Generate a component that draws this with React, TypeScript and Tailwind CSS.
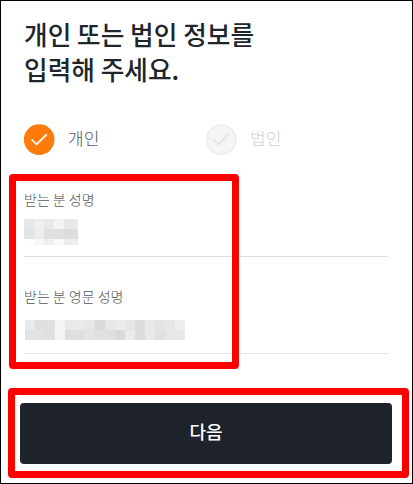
import React, { useState } from 'react'

const NAME_CELLS = [
    ['bg-[#e6e7e8]', 'bg-[#efeff0]', 'bg-[#e9e9ea]', 'bg-[#f4f4f4]', 'bg-[#e5e6e7]', 'bg-[#e8e9ea]'],
    ['bg-[#e2e3e4]', 'bg-[#ededee]', 'bg-[#dfe0e1]', 'bg-[#e0e1e3]', 'bg-[#d9dbdc]', 'bg-[#dddee0]'],
    ['bg-[#fefefe]', 'bg-[#f7f7f7]', 'bg-[#efeff0]', 'bg-[#f9f9f9]', 'bg-[#ebeced]', 'bg-[#efeff0]'],
]

const ENGLISH_CELLS = [
    [
        'bg-[#e9eaeb]', 'bg-[#dedfe0]', 'bg-[#dfe0e1]', 'bg-[#f5f5f6]', 'bg-[#e8e9ea]', 'bg-[#e9eaeb]', 'bg-[#e6e7e8]', 'bg-[#dadadc]',
        'bg-[#e7e7e8]', 'bg-[#eaebec]', 'bg-[#e5e6e7]', 'bg-[#dcdddf]', 'bg-[#e9e9ea]', 'bg-[#e3e4e5]', 'bg-[#e5e6e7]', 'bg-[#eeeff0]',
    ],
    [
        'bg-[#e1e2e3]', 'bg-[#e1e2e4]', 'bg-[#dedfe1]', 'bg-[#f5f5f6]', 'bg-[#dddee0]', 'bg-[#dfe0e2]', 'bg-[#e3e4e5]', 'bg-[#e0e1e3]',
        'bg-[#dfe0e1]', 'bg-[#d9dadb]', 'bg-[#eaebec]', 'bg-[#dcdddf]', 'bg-[#e9eaeb]', 'bg-[#dfe0e1]', 'bg-[#e5e6e7]', 'bg-[#e7e8e9]',
    ],
]

function Check({ active }: { active: boolean }) {
    return (
        <svg className="size-8 shrink-0" viewBox="0 0 32 32" fill="none">
            <circle
                cx="16.2"
                cy="16.6"
                r={active ? 15.3 : 14.7}
                fill={active ? '#fb7b0b' : '#f4f5f6'}
                stroke={active ? 'none' : '#e9eaeb'}
                strokeWidth="1.2"
            />
            <path
                d="M8.6 16.3l5 5 10.2-10"
                stroke={active ? '#fff0dd' : '#e1e3e5'}
                strokeWidth="1.9"
            />
        </svg>
    )
}

export default function App() {
    const [type, setType] = useState('personal')

    return (
        <div className="relative w-[413px] h-[484px] bg-white border border-black overflow-hidden font-['Noto_Sans_CJK_KR',sans-serif]">
            <main className="flex flex-col pt-[15px]">
                <h1 className="ml-[23px] text-[25.7px] leading-[35px] font-medium text-[#20242b]">
                    개인 또는 법인 정보를<br />입력해 주세요.
                </h1>

                <div className="flex ml-[22px] mt-[37px] h-8">
                    <button type="button" onClick={() => setType('personal')} className="flex items-center gap-[13px] w-[182px]">
                        <Check active={type === 'personal'} />
                        <span className="text-[17px] leading-8 font-light text-[#555a63] -mt-0.5">개인</span>
                    </button>
                    <button type="button" onClick={() => setType('company')} className="flex items-center gap-[13px]">
                        <Check active={type === 'company'} />
                        <span className="text-[17px] leading-8 font-light text-[#cfd1d3] -mt-0.5">법인</span>
                    </button>
                </div>

                {/* 받는 분 정보 */}
                <section className="ml-[23px] w-[364px] mt-[34px]">
                    <div className="h-[68px] border-b border-[#dcdddd]">
                        <p className="h-[30px] text-[14px] leading-5 font-light text-[#55585c]">받는 분 성명</p>
                        <div className="grid grid-cols-[10px_10px_10px_10px_7px_7px] grid-rows-[10px_10px_6px] w-[54px]">
                            {NAME_CELLS.flat().map((color, i) => <span key={i} className={color} />)}
                        </div>
                    </div>
                    <div className="h-[97px] pt-[29px] border-b border-[#e2e2e3]">
                        <p className="h-[34px] text-[14px] leading-5 font-light text-[#55585c]">받는 분 영문 성명</p>
                        <div className="grid grid-cols-16 grid-rows-[10px_10px] w-40 ml-px">
                            {ENGLISH_CELLS.flat().map((color, i) => <span key={i} className={color} />)}
                        </div>
                    </div>
                </section>

                <button type="button" className="ml-[19px] mt-[49px] w-[372px] h-[61px] rounded-[4px] bg-[#1e222a] text-white text-[18px] leading-6 font-medium pb-[5px]">
                    다음
                </button>
            </main>

            {/* 강조 테두리 */}
            <div className="absolute left-2 top-[173px] w-[230px] h-[195px] border-7 border-[#fe0000] rounded-[4px] pointer-events-none" />
            <div className="absolute left-[7px] top-[387px] w-[401px] h-[90px] border-7 border-[#fe0000] rounded-[4px] pointer-events-none" />
        </div>
    )
}
